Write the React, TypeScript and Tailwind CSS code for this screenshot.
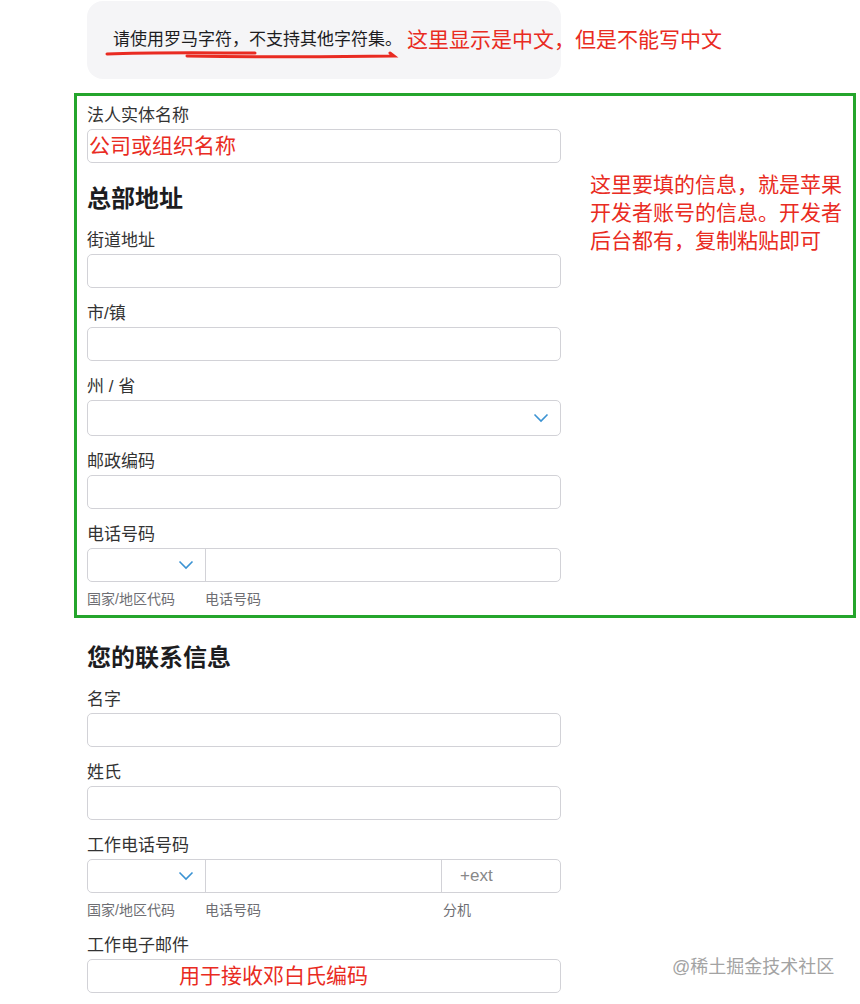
import React from "react";

const FONT = { fontFamily: '"Liberation Sans", "Noto Sans CJK SC", sans-serif' };

const Chevron = () => (
  <svg width="16" height="10" viewBox="0 0 16 10" fill="none">
    <path d="M1.5 1.5l6.5 6.5 6.5-6.5" stroke="#3b93d3" strokeWidth="1.6" />
  </svg>
);

const Label = ({ text }: { text: string }) => (
  <div className="text-[17px] leading-[22px] text-[#333] mb-[2px]">{text}</div>
);

const Input = ({ children }: { children?: React.ReactNode }) => (
  <div className="h-[34px] w-[474px] rounded-[5px] border border-[#d2d2d7] bg-white flex items-center px-[1px]">
    {children}
  </div>
);

const Field = ({ label, first, children }: { label: string; first?: boolean; children?: React.ReactNode }) => (
  <div className={first ? "" : "mt-[15px]"}>
    <Label text={label} />
    <Input>{children}</Input>
  </div>
);

const RedNote = ({ children, className }: { children: React.ReactNode; className?: string }) => (
  <span className={`text-[21px] leading-[28px] text-[#e92b22] whitespace-nowrap ${className ?? ""}`}>{children}</span>
);

const Heading = ({ text, className }: { text: string; className?: string }) => (
  <h2 className={`text-[24px] leading-[32px] font-bold text-[#1d1d1f] ${className ?? ""}`}>{text}</h2>
);

const PhoneRow = ({ ext }: { ext?: boolean }) => (
  <div className="mt-[15px]">
    <Label text={ext ? "工作电话号码" : "电话号码"} />
    <div className="h-[34px] w-[474px] rounded-[5px] border border-[#d2d2d7] bg-white flex">
      <div className="w-[118px] flex items-center justify-end pr-[11px] border-r border-[#d2d2d7]">
        <Chevron />
      </div>
      <div className={ext ? "w-[236px] border-r border-[#d2d2d7]" : "flex-1"} />
      {ext && (
        <div className="flex-1 flex items-center pl-[18px] text-[17px] text-[#888]">+ext</div>
      )}
    </div>
    <div className="mt-[7px] flex text-[14px] leading-[20px] text-[#6e6e73]">
      <span className="w-[118px]">国家/地区代码</span>
      <span className={ext ? "w-[238px]" : ""}>电话号码</span>
      {ext && <span>分机</span>}
    </div>
  </div>
);

export default function App() {
  return (
    <div className="relative w-[860px] h-[1004px] bg-white overflow-hidden pt-[1px]" style={FONT}>
      <div className="pl-[87px]">
        <div className="relative h-[78px] w-[474px] rounded-[16px] bg-[#f5f5f7] flex items-center pl-[26px]">
          <span className="text-[17px] leading-[22px] text-[#1d1d1f] whitespace-nowrap">
            请使用罗马字符，不支持其他字符集。
          </span>
          <RedNote className="ml-[5px]">这里显示是中文，但是不能写中文</RedNote>
          <svg className="absolute left-[18px] top-[48px]" width="300" height="14" viewBox="0 0 300 14" fill="none">
            <path d="M2 5 C 50 3, 110 4, 150 4" stroke="#e92b22" strokeWidth="3" strokeLinecap="round" />
            <path d="M82 7 C 150 8, 230 8, 289 7 L 285 4" stroke="#e92b22" strokeWidth="3" strokeLinecap="round" />
          </svg>
        </div>
      </div>

      <div className="ml-[74px] mt-[14px] w-[782px] border-[3px] border-[#24a52c] pl-[10px] pt-[9px] pb-[6px] flex">
        <div className="w-[474px]">
          <Field label="法人实体名称" first>
            <RedNote>公司或组织名称</RedNote>
          </Field>
          <Heading text="总部地址" className="mt-[20px]" />
          <Field label="街道地址" />
          <Field label="市/镇" />
          <div className="mt-[15px]">
            <Label text="州 / 省" />
            <div className="h-[36px] w-[474px] rounded-[5px] border border-[#d2d2d7] bg-white flex items-center justify-end pr-[11px]">
              <Chevron />
            </div>
          </div>
          <Field label="邮政编码" />
          <PhoneRow />
        </div>
        <div className="ml-[29px] mt-[66px] text-[21px] leading-[28px] text-[#e92b22]">
          <div>这里要填的信息，就是苹果</div>
          <div>开发者账号的信息。开发者</div>
          <div>后台都有，复制粘贴即可</div>
        </div>
      </div>

      <div className="pl-[87px]">
        <Heading text="您的联系信息" className="mt-[24px]" />
        <Field label="名字" />
        <Field label="姓氏" />
        <PhoneRow ext />
        <Field label="工作电子邮件">
          <RedNote className="ml-[90px]">用于接收邓白氏编码</RedNote>
        </Field>
      </div>

      <div className="absolute left-[672px] top-[954px] text-[18px] leading-[26px] text-[#a3a3a3]">
        @稀土掘金技术社区
      </div>
    </div>
  );
}
